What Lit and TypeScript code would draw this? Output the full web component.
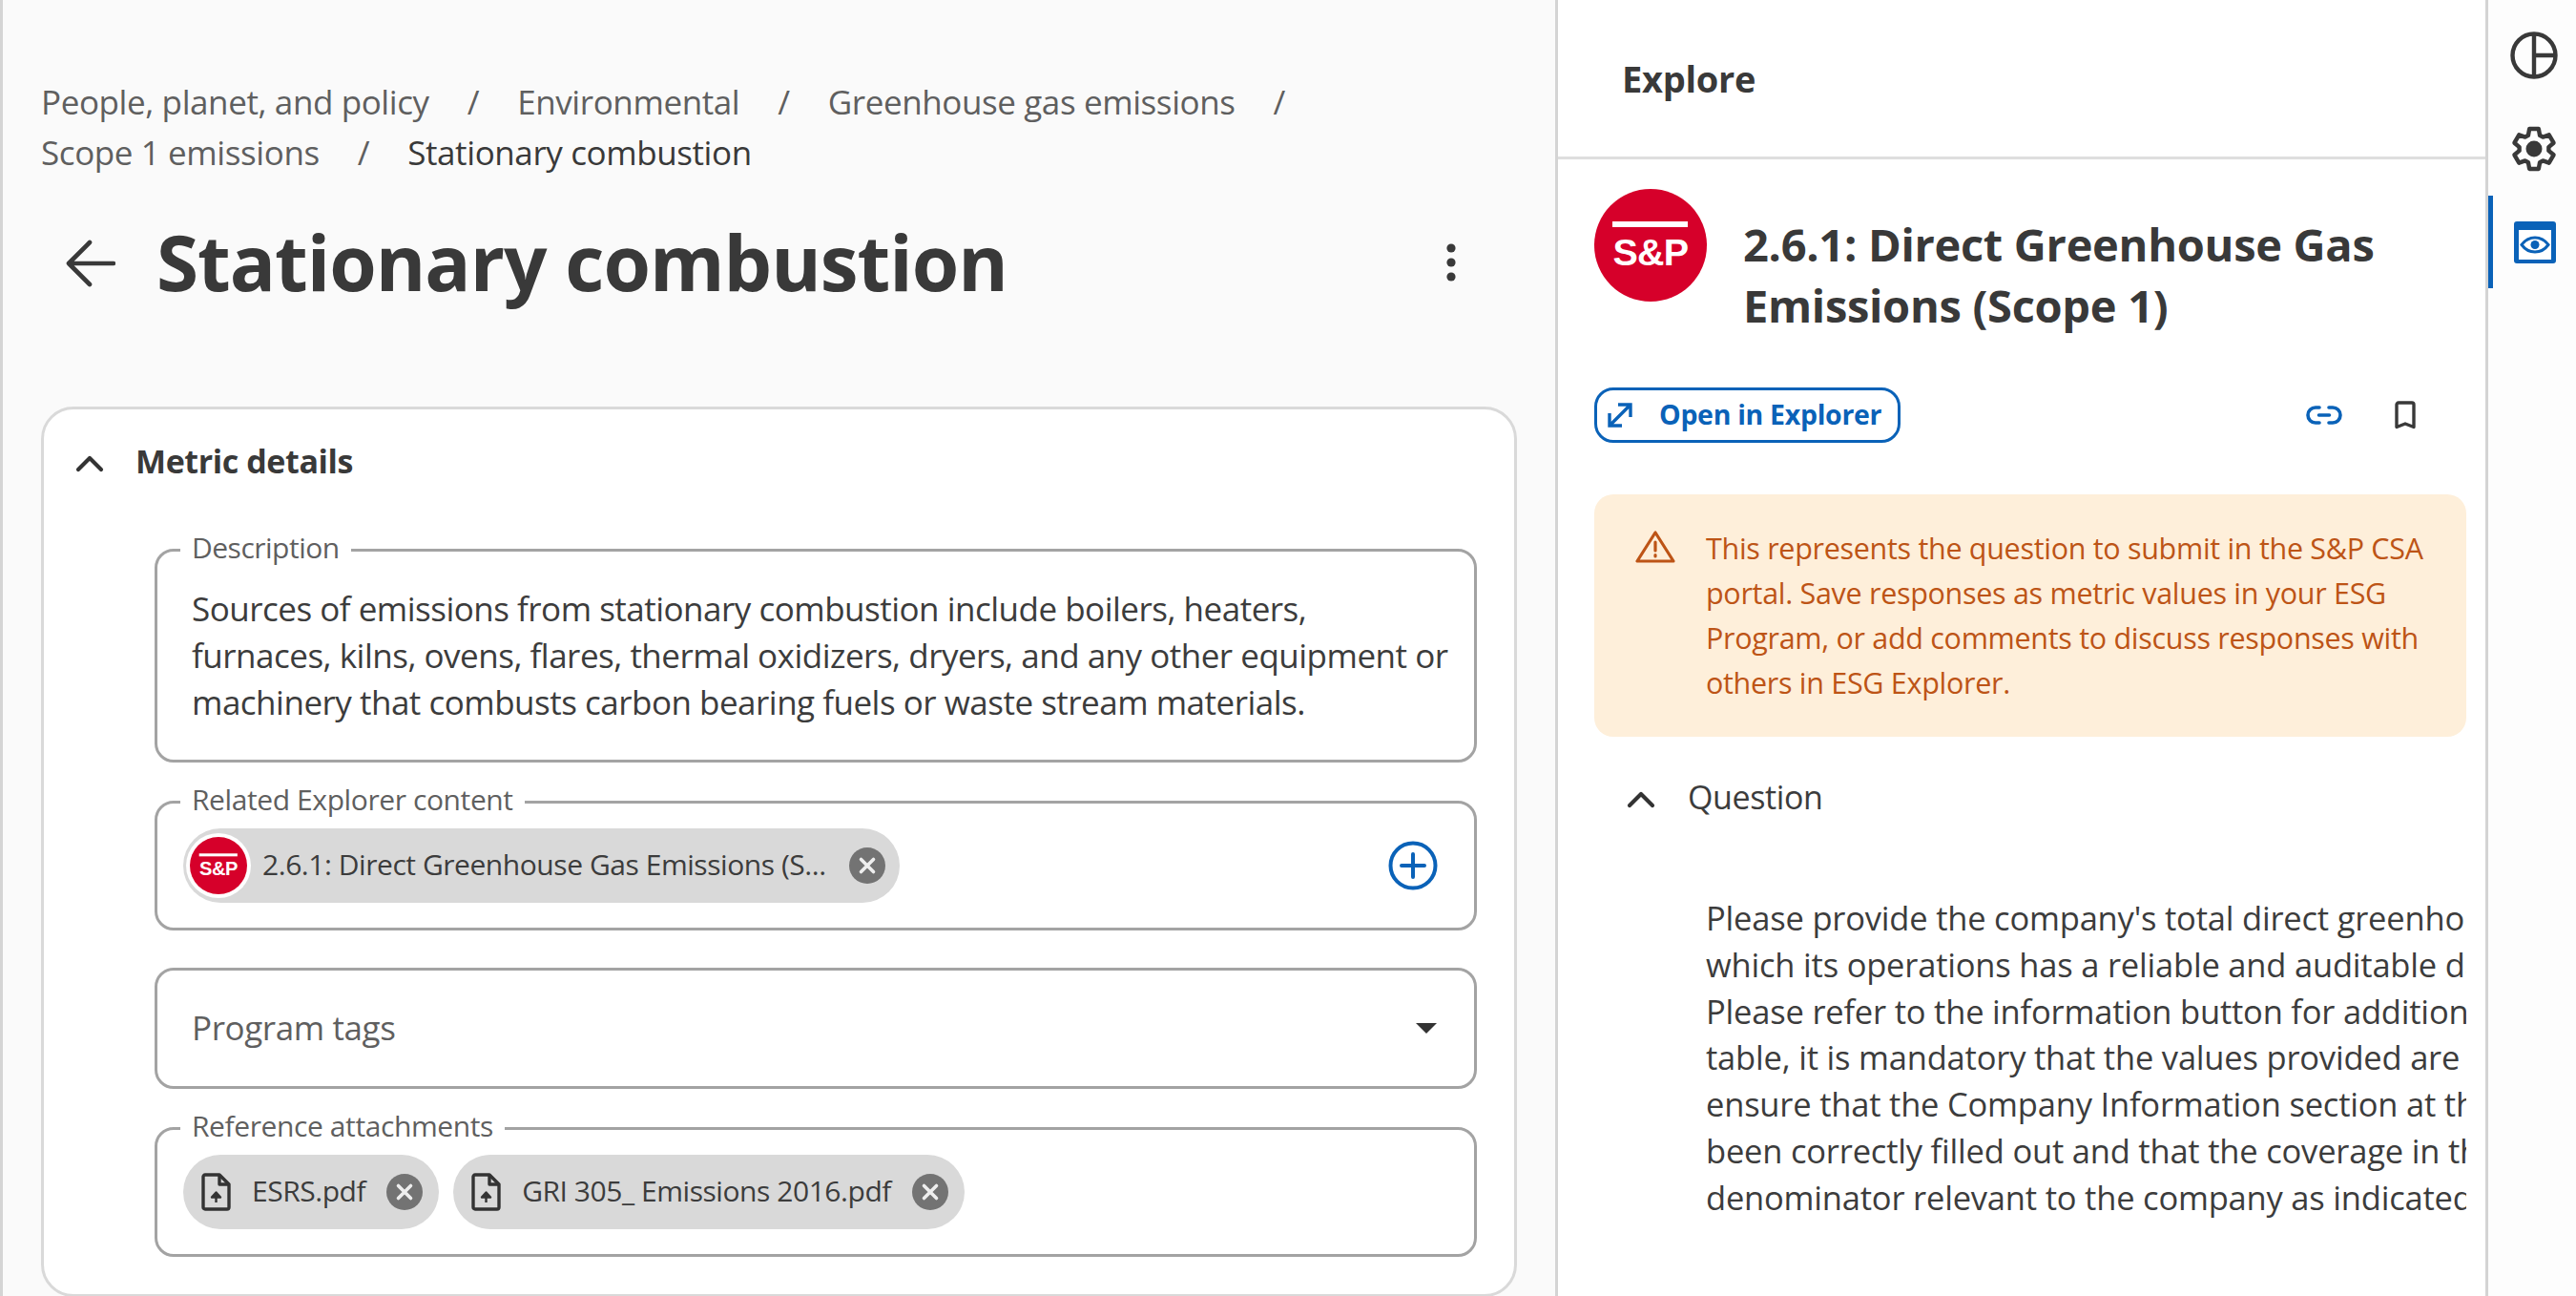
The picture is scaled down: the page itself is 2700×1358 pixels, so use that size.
import { LitElement, html, css } from "lit";
import { customElement } from "lit/decorators.js";

const spLogo = () => html`<svg viewBox="0 0 118 118" aria-hidden="true">
  <circle cx="59" cy="59" r="59" fill="#d6002a"></circle>
  <rect x="19" y="34" width="79" height="6" fill="#fff"></rect>
  <text x="59" y="79.500" text-anchor="middle" font-family="Liberation Sans, Arial, sans-serif" font-size="39.500" font-weight="700" letter-spacing="-0.8" fill="#fff">S&amp;P</text>
</svg>`;
const closeIcon = html`<svg class="x" viewBox="0 0 38 38" aria-hidden="true">
  <circle cx="19" cy="19" r="19" fill="#737373"></circle>
  <path d="M12.500 12.500l13 13M25.500 12.500l-13 13" stroke="#eee" stroke-width="3.600" stroke-linecap="round"></path>
</svg>`;
const fileIcon = html`<svg class="file" viewBox="0 0 34 40" aria-hidden="true">
  <path d="M5 2h15l10 10v24a2 2 0 0 1-2 2H5a2 2 0 0 1-2-2V4a2 2 0 0 1 2-2z" fill="none" stroke="#333" stroke-width="3.400" stroke-linejoin="round"></path>
  <path d="M20 2v10h10" fill="none" stroke="#333" stroke-width="3.400" stroke-linejoin="round"></path>
  <path d="M16.500 31V22M12 25.500l4.500-5 4.500 5z" fill="#333" stroke="#333" stroke-width="2.400" stroke-linejoin="round"></path>
</svg>`;
const chevron = html`<svg class="chev" viewBox="0 0 30 20" aria-hidden="true">
  <path d="M3 16L15 4l12 12" fill="none" stroke="#333" stroke-width="4.200" stroke-linecap="round" stroke-linejoin="round"></path>
</svg>`;

function gearPath(): string {
  const c = 25;
  const pt = (r: number, deg: number) => {
    const a = (deg * Math.PI) / 180;
    return `${(c + r * Math.cos(a)).toFixed(2)} ${(c + r * Math.sin(a)).toFixed(2)}`;
  };
  let d = "";
  for (let k = 0; k < 6; k++) {
    const t = k * 60 - 90;
    d += `${k === 0 ? "M" : "L"}${pt(15.5, t - 23)}L${pt(21.5, t - 13)}L${pt(21.5, t + 13)}L${pt(15.5, t + 23)}`;
  }
  return d + "Z";
}

@customElement("app-root")
export class AppRoot extends LitElement {
  static styles = css`
    :host {
      display: flex;
      width: 2700px;
      height: 1358px;
      overflow: hidden;
      background: #fff;
      color: #393939;
      font-family: "Open Sans", "Noto Sans", sans-serif;
      letter-spacing: -0.4px;
    }
    * { box-sizing: border-box; }
    .main {
      width: 1633px;
      flex: none;
      height: 1358px;
      background: #fafafa;
      border-left: 3px solid #d4d4d4;
      border-right: 3px solid #d4d4d4;
      padding: 80px 40px 0 40px;
      display: flex;
      flex-direction: column;
    }
    .crumbs {
      display: flex;
      flex-wrap: wrap;
      font-size: 35px;
      line-height: 53px;
      color: #5f5f5f;
    }
    .crumbs .sep { margin: 0 40px 0 40px; color: #5f5f5f; }
    .crumbs .cur { color: #393939; }
    .titlebar {
      display: flex;
      align-items: center;
      height: 94px;
      margin-top: 41px;
      padding-left: 25px;
    }
    .back { width: 53px; height: 50px; flex: none; margin: 3px 43px 0 0; }
    h1 {
      margin: 0;
      font-size: 80px;
      line-height: 94px;
      font-weight: 700;
      color: #393939;
      flex: 1;
      letter-spacing: -1px;
    }
    .dots { width: 14px; height: 42px; flex: none; margin: 2px 62px 0 0; }
    .card {
      margin-top: 105px;
      flex: 1;
      background: #fff;
      border: 3px solid #d9d9d9;
      border-radius: 34px;
      padding: 0 39px 0 116px;
    }
    .cardhead {
      display: flex;
      align-items: center;
      height: 135px;
      padding-bottom: 27px;
      margin-left: -86px;
      font-size: 34px;
      font-weight: 700;
    }
    .chev { width: 30px; height: 20px; flex: none; }
    .cardhead .chev { margin: 5px 33px 0 3px; }
    .field {
      margin: 0 0 39px;
      padding: 0 36px;
      border: 3px solid #a3a3a3;
      border-radius: 20px;
      min-width: 0;
    }
    .field legend {
      padding: 0 12px 4px;
      margin-left: -12px;
      font-size: 30px;
      line-height: 20px;
      color: #5f5f5f;
    }
    .desc {
      margin-bottom: 29px;
      padding-top: 25px;
      padding-bottom: 35px;
      font-size: 35px;
      line-height: 49px;
      letter-spacing: -0.5px;
      color: #3c3c3c;
      height: 235px;
    }
    .desc p { margin: 0; white-space: nowrap; }
    .chips {
      display: flex;
      align-items: center;
      gap: 15px;
      margin-left: -9px;
      margin-right: 2px;
      height: 120px;
      padding-bottom: 10px;
    }
    .chip {
      display: flex;
      align-items: center;
      height: 78px;
      border-radius: 39px;
      background: #d9d9d9;
      font-size: 30px;
      color: #3c3c3c;
      white-space: nowrap;
      flex: none;
      letter-spacing: -0.45px;
    }
    .chip span.t { padding-bottom: 3px; }
    .chip.related { width: 751px; padding: 0 15px 0 3px; }
    .ring { width: 68px; height: 68px; border-radius: 50%; background: #fff; padding: 4px; flex: none; display: flex; }
    .ring svg { width: 60px; height: 60px; }
    .chip.related .label { margin-left: 12px; flex: 1; min-width: 0; }
    .x { width: 38px; height: 38px; flex: none; }
    .plus { width: 52px; height: 52px; flex: none; margin-left: auto; }
    .chip.att { padding: 0 17px 0 18px; }
    .file { width: 34px; height: 40px; flex: none; margin-right: 20px; }
    .chip.att .x { margin-left: 22px; }
    .select {
      height: 127px;
      margin: 0 0 29px;
      border: 3px solid #a3a3a3;
      border-radius: 20px;
      display: flex;
      align-items: center;
      justify-content: space-between;
      padding: 0 36px 2px;
      font-size: 35px;
      color: #5f5f5f;
    }
    .caret { width: 22px; height: 11px; flex: none; margin: 2px 3px 0 0; }
    .explore {
      width: 972px;
      flex: none;
      height: 1358px;
      display: flex;
      flex-direction: column;
      overflow: hidden;
    }
    .exphead {
      height: 167px;
      flex: none;
      border-bottom: 3px solid #dedede;
      display: flex;
      align-items: center;
      padding-left: 67px;
      font-size: 38px;
      letter-spacing: -0.3px;
      font-weight: 700;
    }
    .expbody { padding: 31px 20px 0 38px; display: flex; flex-direction: column; }
    .hero { display: flex; gap: 38px; align-items: flex-start; }
    .hero svg { width: 118px; height: 118px; flex: none; }
    .hero h2 {
      margin: 26px 0 0;
      font-size: 47px;
      line-height: 64px;
      font-weight: 700;
      color: #393939;
      letter-spacing: -0.3px;
    }
    .actions { display: flex; align-items: center; margin-top: 54px; height: 58px; }
    .open {
      display: flex;
      align-items: center;
      width: 321px;
      height: 58px;
      border: 3px solid #0a62b8;
      border-radius: 20px;
      color: #0a62b8;
      font-size: 28.500px;
      font-weight: 700;
      padding: 0 0 3px 9px;
      letter-spacing: -0.3px;
      white-space: nowrap;
    }
    .open svg { width: 30px; height: 30px; margin: 3px 26px 0 0; flex: none; }
    .link { width: 38px; height: 20px; margin-left: auto; flex: none; }
    .mark { width: 22px; height: 30px; margin: 0 53px 0 55px; flex: none; }
    .alert {
      margin-top: 54px;
      height: 254px;
      border-radius: 20px;
      background: #feefda;
      display: flex;
      padding: 33px 20px 0 43px;
      color: #bd5416;
      font-size: 30.500px;
      line-height: 47px;
      letter-spacing: -0.3px;
    }
    .alert svg { width: 42px; height: 34px; flex: none; margin: 5px 32px 0 0; }
    .alert p { margin: 0; white-space: nowrap; }
    .qhead { display: flex; align-items: center; margin-top: 33px; height: 60px; font-size: 34px; color: #3c3c3c; padding-left: 34px; }
    .qhead .chev { margin: 6px 34px 0 0; }
    .qtext {
      margin-top: 73px;
      margin-left: 117px;
      font-size: 34.500px;
      line-height: 48.800px;
      letter-spacing: -0.2px;
      color: #3c3c3c;
      overflow: hidden;
      white-space: nowrap;
    }
    .qtext div { overflow: hidden; }
    .rail {
      width: 95px;
      flex: none;
      height: 1358px;
      border-left: 3px solid #d4d4d4;
      position: relative;
      padding: 33px 0 0 23px;
      display: flex;
      flex-direction: column;
      background: #fdfdfd;
    }
    .rail svg { width: 50px; height: 50px; flex: none; }
    .rail svg + svg { margin-top: 48px; }
    .bar { position: absolute; left: 0; top: 205px; width: 5px; height: 97px; background: #0a62b8; }
  `;

  render() {
    const q = [
      "Please provide the company's total direct greenhouse gas",
      "which its operations has a reliable and auditable data",
      "Please refer to the information button for additional",
      "table, it is mandatory that the values provided are",
      "ensure that the Company Information section at the",
      "been correctly filled out and that the coverage in the",
      "denominator relevant to the company as indicated",
    ];
    return html`
      <section class="main">
        <nav class="crumbs">
          <span>People, planet, and policy</span><span class="sep">/</span>
          <span>Environmental</span><span class="sep">/</span>
          <span>Greenhouse gas emissions</span><span class="sep">/</span>
          <span>Scope 1 emissions</span><span class="sep">/</span>
          <span class="cur">Stationary combustion</span>
        </nav>
        <div class="titlebar">
          <svg class="back" viewBox="0 0 53 50" aria-hidden="true">
            <path d="M51 25H4M26 3L4 25l22 22" fill="none" stroke="#393939" stroke-width="4.600" stroke-linecap="round" stroke-linejoin="round"></path>
          </svg>
          <h1>Stationary combustion</h1>
          <svg class="dots" viewBox="0 0 14 42" aria-hidden="true">
            <circle cx="7" cy="6" r="4.600" fill="#393939"></circle>
            <circle cx="7" cy="21" r="4.600" fill="#393939"></circle>
            <circle cx="7" cy="36" r="4.600" fill="#393939"></circle>
          </svg>
        </div>
        <div class="card">
          <div class="cardhead">${chevron}<span>Metric details</span></div>
          <fieldset class="field desc">
            <legend>Description</legend>
            <p>Sources of emissions from stationary combustion include boilers, heaters,</p>
            <p>furnaces, kilns, ovens, flares, thermal oxidizers, dryers, and any other equipment or</p>
            <p>machinery that combusts carbon bearing fuels or waste stream materials.</p>
          </fieldset>
          <fieldset class="field">
            <legend>Related Explorer content</legend>
            <div class="chips">
              <div class="chip related">
                <span class="ring">${spLogo()}</span>
                <span class="label t">2.6.1: Direct Greenhouse Gas Emissions (S...</span>
                ${closeIcon}
              </div>
              <svg class="plus" viewBox="0 0 52 52" aria-hidden="true">
                <circle cx="26" cy="26" r="23.500" fill="none" stroke="#0a62b8" stroke-width="4"></circle>
                <path d="M26 14v24M14 26h24" stroke="#0a62b8" stroke-width="4" stroke-linecap="round"></path>
              </svg>
            </div>
          </fieldset>
          <div class="select">
            <span>Program tags</span>
            <svg class="caret" viewBox="0 0 22 11" aria-hidden="true"><path d="M0 0h22L11 11z" fill="#333"></path></svg>
          </div>
          <fieldset class="field">
            <legend>Reference attachments</legend>
            <div class="chips">
              <div class="chip att">${fileIcon}<span class="t">ESRS.pdf</span>${closeIcon}</div>
              <div class="chip att">${fileIcon}<span class="t">GRI 305_ Emissions 2016.pdf</span>${closeIcon}</div>
            </div>
          </fieldset>
        </div>
      </section>
      <section class="explore">
        <div class="exphead">Explore</div>
        <div class="expbody">
          <div class="hero">
            ${spLogo()}
            <h2>2.6.1: Direct Greenhouse Gas<br />Emissions (Scope 1)</h2>
          </div>
          <div class="actions">
            <div class="open">
              <svg viewBox="0 0 30 30" aria-hidden="true">
                <path d="M4 26L26 4M13 4h13v13M4 13v13h13" fill="none" stroke="#0a62b8" stroke-width="3.400"></path>
              </svg>
              <span>Open in Explorer</span>
            </div>
            <svg class="link" viewBox="0 0 38 20" aria-hidden="true">
              <path d="M14 2H10a8 8 0 0 0 0 16h4M24 2h4a8 8 0 0 1 0 16h-4M13.500 10h11" fill="none" stroke="#0a62b8" stroke-width="3.600" stroke-linecap="round"></path>
            </svg>
            <svg class="mark" viewBox="0 0 22 30" aria-hidden="true">
              <path d="M2 4a2 2 0 0 1 2-2h14a2 2 0 0 1 2 2v23.500l-9-3.500-9 3.500z" fill="none" stroke="#393939" stroke-width="3.400" stroke-linejoin="round"></path>
            </svg>
          </div>
          <div class="alert">
            <svg viewBox="0 0 42 34" aria-hidden="true">
              <path d="M21 2L2 32h38z" fill="none" stroke="#bd5416" stroke-width="3.200" stroke-linejoin="round"></path>
              <path d="M21 12v9M21 25.500v1.500" stroke="#bd5416" stroke-width="3.200" stroke-linecap="round"></path>
            </svg>
            <div>
              <p>This represents the question to submit in the S&amp;P CSA</p>
              <p>portal. Save responses as metric values in your ESG</p>
              <p>Program, or add comments to discuss responses with</p>
              <p>others in ESG Explorer.</p>
            </div>
          </div>
          <div class="qhead">${chevron}<span>Question</span></div>
          <div class="qtext">${q.map((l) => html`<div>${l}</div>`)}</div>
        </div>
      </section>
      <aside class="rail">
        <div class="bar"></div>
        <svg viewBox="0 0 50 50" aria-hidden="true">
          <circle cx="25" cy="25" r="22.500" fill="none" stroke="#393939" stroke-width="4.400"></circle>
          <path d="M25 3v44M25 25h22" fill="none" stroke="#393939" stroke-width="4.400"></path>
        </svg>
        <svg viewBox="0 0 50 50" aria-hidden="true">
          <path d=${gearPath()} fill="none" stroke="#393939" stroke-width="4.400" stroke-linejoin="round"></path>
          <circle cx="25" cy="25" r="8.500" fill="#393939"></circle>
        </svg>
        <svg viewBox="0 0 50 50" aria-hidden="true">
          <rect x="4" y="3" width="44" height="44" rx="3" fill="#0a62b8"></rect>
          <rect x="9" y="12" width="34" height="31" fill="#fff"></rect>
          <path d="M12 27.500c3.700-5 8.500-7.500 14-7.500s10.300 2.500 14 7.500c-3.700 5-8.500 7.500-14 7.500s-10.300-2.500-14-7.500z" fill="none" stroke="#0a62b8" stroke-width="3"></path>
          <circle cx="26" cy="27.500" r="4.500" fill="#0a62b8"></circle>
        </svg>
      </aside>
    `;
  }
}
